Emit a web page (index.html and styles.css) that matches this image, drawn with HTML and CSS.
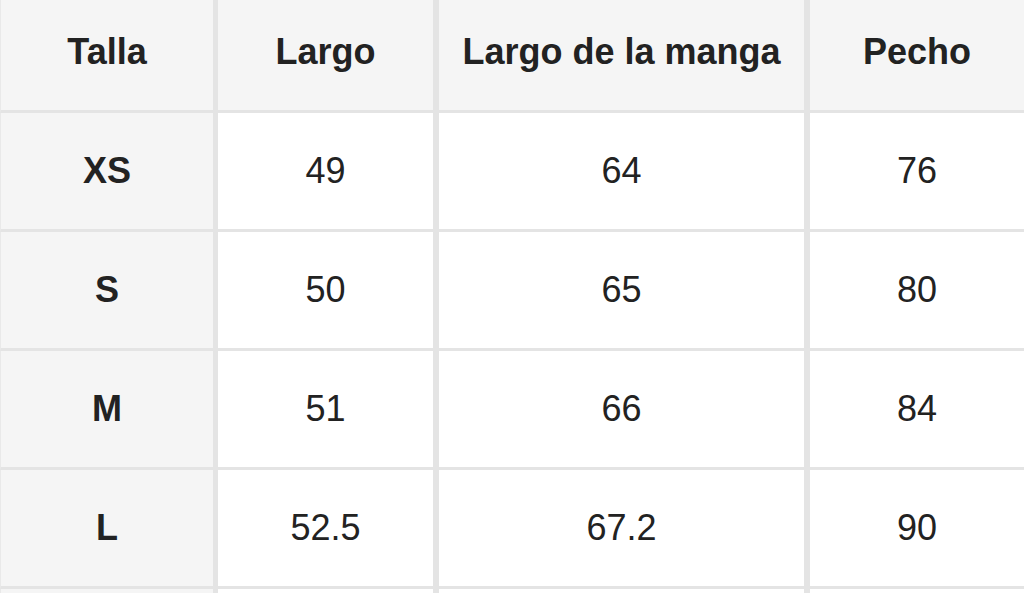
FILE: index.html
```html
<!DOCTYPE html>
<html lang="es">
<head>
<meta charset="utf-8">
<title>Tabla de tallas</title>
<link rel="stylesheet" href="styles.css">
</head>
<body>
<table class="size-table">
  <colgroup>
    <col class="c1"><col class="c2"><col class="c3"><col class="c4">
  </colgroup>
  <thead>
    <tr><th>Talla</th><th>Largo</th><th>Largo de la manga</th><th>Pecho</th></tr>
  </thead>
  <tbody>
    <tr><th>XS</th><td>49</td><td>64</td><td>76</td></tr>
    <tr><th>S</th><td>50</td><td>65</td><td>80</td></tr>
    <tr><th>M</th><td>51</td><td>66</td><td>84</td></tr>
    <tr><th>L</th><td>52.5</td><td>67.2</td><td>90</td></tr>
    <tr><th></th><td></td><td></td><td></td></tr>
  </tbody>
</table>
</body>
</html>
```
FILE: styles.css
```css
html, body {
  margin: 0;
  padding: 0;
  background: #ffffff;
  overflow: hidden;
}

.size-table {
  border-collapse: separate;
  border-spacing: 0;
  table-layout: fixed;
  width: 1030px;
  margin-top: -6px;
  font-family: "Liberation Sans", Arial, sans-serif;
  font-size: 36px;
  color: #222222;
}

.c1 { width: 218px; }
.c2 { width: 221px; }
.c3 { width: 371px; }
.c4 { width: 220px; }

.size-table th,
.size-table td {
  padding: 0;
  text-align: center;
  vertical-align: middle;
  border-bottom: 3px solid #e4e4e4;
  border-right: 6px solid #e4e4e4;
  box-sizing: border-box;
  height: 119px;
}

.size-table tr > :first-child {
  border-left: 1px solid #e9e9e9;
  border-right-width: 5px;
}

.size-table th {
  font-weight: bold;
  background: #f5f5f5;
}

.size-table td {
  font-weight: normal;
  background: #ffffff;
}
```
